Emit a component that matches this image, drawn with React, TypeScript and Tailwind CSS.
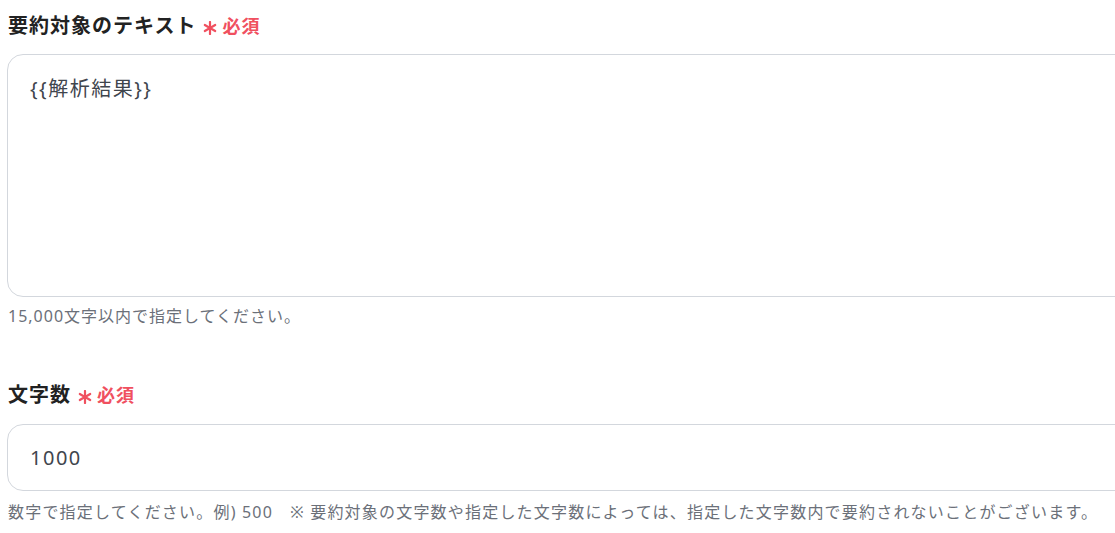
import React from "react";

const font = {
  fontFamily: '"Noto Sans", "Noto Sans CJK JP", sans-serif',
};

function RequiredMark() {
  return (
    <span className="ml-[7px] inline-flex items-center gap-[5px] text-[18px] font-bold tracking-[1px] text-[#f0505f]">
      <svg width="14" height="14" viewBox="0 0 14 14" className="mt-[3px]">
        <g stroke="#f0505f" strokeWidth="2.2" strokeLinecap="round">
          <line x1="7" y1="1" x2="7" y2="13" />
          <line x1="1.8" y1="4" x2="12.2" y2="10" />
          <line x1="1.8" y1="10" x2="12.2" y2="4" />
        </g>
      </svg>
      必須
    </span>
  );
}

function FieldLabel({ text }: { text: string }) {
  return (
    <div className="flex items-center text-[20px] font-bold leading-[28px] tracking-[1px] text-[#222]">
      {text}
      <RequiredMark />
    </div>
  );
}

export default function App() {
  return (
    <div
      className="h-[533px] w-[1115px] overflow-hidden bg-white"
      style={font}
    >
      <div className="w-[1140px] pl-[7px] pt-[12px]">
        <div className="pl-[1px]">
          <FieldLabel text="要約対象のテキスト" />
        </div>
        <div className="mt-[14px] h-[243px] rounded-[16px] border border-[#d3d7dd] px-[22px] pt-[19px] text-[20px] leading-[30px] tracking-[1.5px] text-[#3f454d]">
          {"{{解析結果}}"}
        </div>
        <p className="mt-[7px] pl-[1px] text-[16px] leading-[24px] tracking-[1px] text-[#6b7079]">
          15,000文字以内で指定してください。
        </p>

        <div className="mt-[53px] pl-[1px]">
          <FieldLabel text="文字数" />
        </div>
        <div className="mt-[15px] flex h-[67px] items-center rounded-[16px] border border-[#d3d7dd] px-[22px] text-[20px] tracking-[1.5px] text-[#3f454d]">
          1000
        </div>
        <p className="mt-[9px] whitespace-nowrap pl-[1px] text-[16px] leading-[24px] tracking-[1.2px] text-[#6b7079]">
          数字で指定してください。例) 500　※ 要約対象の文字数や指定した文字数によっては、指定した文字数内で要約されないことがございます。
        </p>
      </div>
    </div>
  );
}
